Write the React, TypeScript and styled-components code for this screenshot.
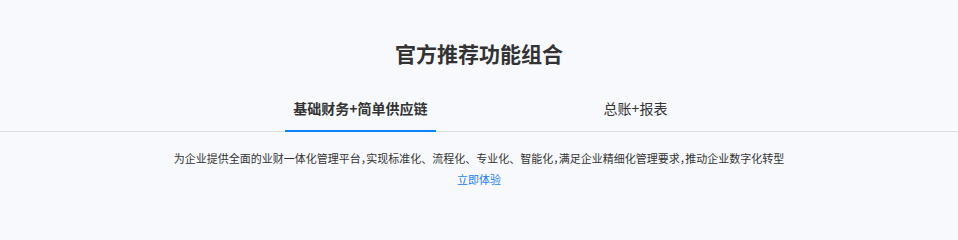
import React, { useState } from "react";
import styled, { createGlobalStyle } from "styled-components";

const GlobalStyle = createGlobalStyle`
  html, body {
    margin: 0;
    padding: 0;
    background: #f8f9fc;
  }
  body {
    font-family: "Noto Sans CJK SC", "Noto Sans", sans-serif;
    color: #333;
  }
`;

const tabs = [
  {
    title: "基础财务+简单供应链",
    desc: "为企业提供全面的业财一体化管理平台，实现标准化、流程化、专业化、智能化，满足企业精细化管理要求，推动企业数字化转型",
  },
  {
    title: "总账+报表",
    desc: "为企业提供规范的总账核算与多维报表，助力企业财务管理规范化、精细化",
  },
];

// commas in the original are set half-width
function renderDesc(text: string) {
  return text.split("，").map((part, i, arr) => (
    <React.Fragment key={i}>
      {part}
      {i < arr.length - 1 && <Comma>，</Comma>}
    </React.Fragment>
  ));
}

function App() {
  const [active, setActive] = useState(0);

  return (
    <>
      <GlobalStyle />
      <Section>
        <Title>官方推荐功能组合</Title>
        <TabBar>
          {tabs.map((tab, i) => (
            <TabCell key={tab.title}>
              <TabButton $active={i === active} onClick={() => setActive(i)}>
                {tab.title}
              </TabButton>
            </TabCell>
          ))}
        </TabBar>
        <Panel>
          <Desc>{renderDesc(tabs[active].desc)}</Desc>
          <TryLink href="#">立即体验</TryLink>
        </Panel>
      </Section>
    </>
  );
}

const Section = styled.section`
  width: 958px;
  height: 204px;
  box-sizing: border-box;
  padding-top: 38px;
  background: #f8f9fc;
`;

const Title = styled.h2`
  margin: 0;
  text-align: center;
  font-size: 21px;
  line-height: 30px;
  font-weight: 700;
  color: #333;
`;

const TabBar = styled.div`
  display: grid;
  grid-template-columns: repeat(2, 275px);
  padding-left: 223px;
  margin-top: 30px;
  border-bottom: 1px solid #dcdde0;
`;

const TabCell = styled.div`
  display: flex;
  justify-content: center;
`;

const TabButton = styled.button<{ $active: boolean }>`
  font-family: inherit;
  background: none;
  border: none;
  border-bottom: 2px solid ${(p) => (p.$active ? "#0a84ff" : "transparent")};
  margin-bottom: -1px;
  padding: 0 8px 12px;
  font-size: 14px;
  line-height: 20px;
  font-weight: ${(p) => (p.$active ? 700 : 400)};
  color: #333;
  cursor: pointer;
`;

const Panel = styled.div`
  display: flex;
  flex-direction: column;
  align-items: center;
  padding-top: 16px;
`;

const Desc = styled.p`
  margin: 0;
  font-size: 11px;
  line-height: 21px;
  color: #333;
`;

const Comma = styled.span`
  font-feature-settings: "halt";
`;

const TryLink = styled.a`
  font-size: 11px;
  line-height: 21px;
  color: #1a7cf5;
  text-decoration: none;
`;

export default App;
